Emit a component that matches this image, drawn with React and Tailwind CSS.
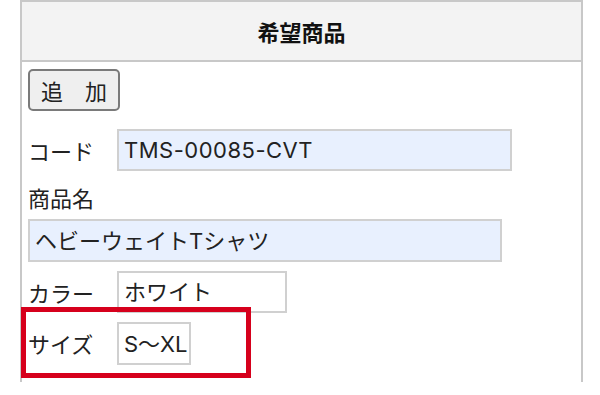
import React from "react";

const jp = { fontFamily: "'Noto Sans CJK JP', sans-serif" };
const val = { fontFamily: "Inter, 'Noto Sans CJK JP', sans-serif" };

function Field({ children, className }) {
  return (
    <div
      className={
        "flex items-center border-2 border-[#d0d0d0] pl-[5px] text-[22px] text-[#222] leading-none " +
        className
      }
      style={val}
    >
      {children}
    </div>
  );
}

export default function App() {
  return (
    <div className="relative w-[600px] h-[395px] bg-white overflow-hidden" style={jp}>
      <div className="ml-[20px] w-[563px] h-[382px] border-2 border-b-0 border-[#c8c8c8]">
        <div className="h-[60px] bg-[#f3f3f3] border-b-2 border-[#c8c8c8] flex items-center justify-center text-[22px] font-bold text-[#111]">
          希望商品
        </div>
        <div className="pl-[6px] flex flex-col items-start">
          <button className="mt-[7px] h-[42px] w-[92px] rounded-[5px] border-2 border-[#7a7a7a] bg-[#efefef] text-[22px] text-[#222] leading-none flex items-center justify-center">
            追　加
          </button>
          <div className="mt-[18px] flex items-center">
            <div className="w-[89px] text-[22px] text-[#222]">コード</div>
            <Field className="w-[395px] h-[42px] bg-[#e8f0fe] tracking-[0.5px]">TMS-00085-CVT</Field>
          </div>
          <div className="h-[36px] mt-[8px] flex items-center text-[22px] text-[#222]">商品名</div>
          <Field className="mt-[4px] w-[474px] h-[43px] bg-[#e8f0fe]">ヘビーウェイトTシャツ</Field>
          <div className="mt-[9px] flex items-center">
            <div className="w-[89px] text-[22px] text-[#222]">カラー</div>
            <Field className="w-[170px] h-[42px] bg-white">ホワイト</Field>
          </div>
          <div className="mt-[9px] flex items-center">
            <div className="w-[89px] text-[22px] text-[#222]">サイズ</div>
            <Field className="w-[74px] h-[43px] bg-white">S〜XL</Field>
          </div>
        </div>
      </div>
      <div className="absolute left-[21px] top-[307px] w-[230px] h-[71px] border-[5px] border-[#d6001c]" />
    </div>
  );
}
